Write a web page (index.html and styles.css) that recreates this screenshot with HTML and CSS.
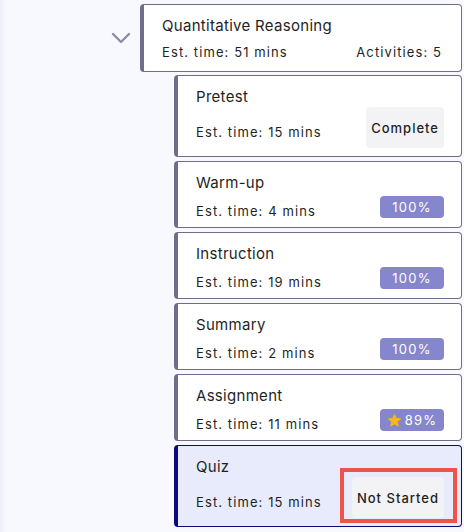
FILE: index.html
```html
<!DOCTYPE html>
<html>
<head>
    <title>Quantitative Reasoning</title>
    <meta name="viewport" content="width=device-width, initial-scale=1.0">
    <link rel="stylesheet" href="styles.css">
</head>
<body>
    <div id="tree">
      <div class="module-head">
        <div class="toggle">
          <svg width="20" height="12" viewBox="0 0 20 12"><path d="M2 2 L10 10 L18 2" fill="none" stroke="#8f8ca6" stroke-width="2.4" stroke-linecap="round" stroke-linejoin="round"/></svg>
        </div>
        <div class="card module">
          <div class="title">Quantitative Reasoning</div>
          <div class="meta">
            <span class="time">Est. time: 51 mins</span>
            <span class="time">Activities: 5</span>
          </div>
        </div>
      </div>

      <div class="activities">
        <div class="card">
          <div class="title">Pretest</div>
          <div class="meta">
            <span class="time">Est. time: 15 mins</span>
            <span class="status">Complete</span>
          </div>
        </div>
        <div class="card">
          <div class="title">Warm-up</div>
          <div class="meta">
            <span class="time">Est. time: 4 mins</span>
            <span class="score">100%</span>
          </div>
        </div>
        <div class="card">
          <div class="title">Instruction</div>
          <div class="meta">
            <span class="time">Est. time: 19 mins</span>
            <span class="score">100%</span>
          </div>
        </div>
        <div class="card">
          <div class="title">Summary</div>
          <div class="meta">
            <span class="time">Est. time: 2 mins</span>
            <span class="score">100%</span>
          </div>
        </div>
        <div class="card">
          <div class="title">Assignment</div>
          <div class="meta">
            <span class="time">Est. time: 11 mins</span>
            <span class="score">
              <svg width="15" height="15" viewBox="0 0 24 24"><path d="M12 2.2 L14.9 8.6 L21.8 9.3 L16.6 14 L18.1 20.9 L12 17.4 L5.9 20.9 L7.4 14 L2.2 9.3 L9.1 8.6 Z" fill="#f7b51e" stroke="#f7b51e" stroke-width="1.5" stroke-linejoin="round"/></svg>
              89%
            </span>
          </div>
        </div>
        <div class="card current">
          <div class="title">Quiz</div>
          <div class="meta">
            <span class="time">Est. time: 15 mins</span>
            <span class="status">Not Started<span class="highlight"></span></span>
          </div>
        </div>
      </div>
    </div>
</body>
</html>
```

FILE: styles.css
```css
body {
    font-family: Inter, "Noto Sans", sans-serif;
    margin: 0;
    padding: 0;
    color: #1f1f24;
    background: linear-gradient(to right, #eceefa 0, #f8f9fe 6px);
    min-height: 532px;
}
#tree {
    padding-top: 4px;
    padding-right: 2px;
}
.module-head {
    display: flex;
    align-items: center;
}
.toggle {
    width: 140px;
    flex: none;
    display: flex;
    justify-content: flex-end;
    padding-right: 9px;
    box-sizing: border-box;
}
.toggle svg {
    display: block;
}
.card {
    display: flex;
    flex-direction: column;
    box-sizing: border-box;
    background-color: white;
    border: 1px solid #6f6d8a;
    border-left: 4px solid #6f6d8a;
    border-radius: 4px;
    padding: 10px 17px 6px 18px;
}
.card.module {
    flex: 1;
    padding-bottom: 9px;
    padding-right: 19px;
}
.card.module .meta .time {
    margin-top: 6px;
}
.card.current {
    background-color: #e7ebfb;
    border-color: #0a0a7a;
}
.title {
    font-size: 15px;
    line-height: 21px;
    letter-spacing: 0.3px;
}
.meta {
    display: flex;
    justify-content: space-between;
    align-items: center;
}
.time {
    font-size: 13px;
    line-height: 20px;
    letter-spacing: 1.1px;
    margin-top: 8px;
}
.activities {
    display: flex;
    flex-direction: column;
    gap: 4px;
    margin: 3px 0 0 174px;
}
.score {
    display: flex;
    align-items: center;
    justify-content: center;
    gap: 3px;
    width: 64px;
    height: 22px;
    border-radius: 4px;
    background-color: #8686cc;
    color: white;
    font-size: 13px;
    letter-spacing: 1.2px;
}
.score svg {
    display: block;
}
.status {
    position: relative;
    display: flex;
    align-items: center;
    justify-content: center;
    height: 41px;
    padding: 0 5px;
    border-radius: 4px;
    background-color: #f3f3f6;
    font-size: 13px;
    font-weight: 500;
    letter-spacing: 1px;
}
.activities .card:first-child {
    padding-bottom: 8px;
}
.activities .card:last-child {
    padding-bottom: 8px;
}
.highlight {
    position: absolute;
    left: -12px;
    right: -13px;
    top: -9px;
    bottom: -5px;
    border: 4px solid #f0534b;
}
```
